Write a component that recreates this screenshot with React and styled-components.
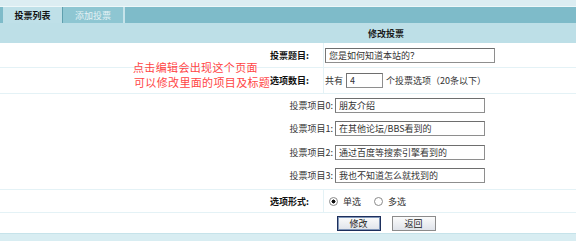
import React from "react";
import styled, { createGlobalStyle } from "styled-components";

const items = [
  "朋友介绍",
  "在其他论坛/BBS看到的",
  "通过百度等搜索引擎看到的",
  "我也不知道怎么就找到的",
];

const App = () => {
  return (
    <Page>
      <GlobalStyle />
      <TopStrip />
      <TabBar>
        <Tab active>投票列表</Tab>
        <Tab>添加投票</Tab>
      </TabBar>
      <HeaderRow>修改投票</HeaderRow>
      <FormRow height={24}>
        <Label>投票题目:</Label>
        <Field>
          <TextBox width={170} value="您是如何知道本站的？" readOnly />
        </Field>
      </FormRow>
      <FormRow height={25}>
        <Label>选项数目:</Label>
        <Field>
          <span>共有</span>
          <TextBox width={37} value="4" readOnly />
          <span>个投票选项（20条以下）</span>
        </Field>
      </FormRow>
      <ItemBlock>
        {items.map((text, i) => (
          <ItemRow key={i}>
            <ItemLabel>投票项目{i}:</ItemLabel>
            <TextBox width={150} value={text} readOnly />
          </ItemRow>
        ))}
      </ItemBlock>
      <FormRow height={22}>
        <Label>选项形式:</Label>
        <Field>
          <Radio checked />
          <RadioText>单选</RadioText>
          <Radio />
          <RadioText>多选</RadioText>
        </Field>
      </FormRow>
      <ButtonRow>
        <Button primary>修改</Button>
        <Button>返回</Button>
      </ButtonRow>
      <BottomBand />
      <Note>
        <NoteLine>点击编辑会出现这个页面</NoteLine>
        <NoteLine indent>可以修改里面的项目及标题</NoteLine>
      </Note>
    </Page>
  );
};

const GlobalStyle = createGlobalStyle`
  html, body {
    margin: 0;
    padding: 0;
    background: #ffffff;
  }
  body {
    font-family: "Noto Sans CJK SC", "DejaVu Sans", sans-serif;
    font-size: 9px;
    color: #333333;
  }
`;

const Page = styled.div`
  position: relative;
  width: 576px;
  height: 241px;
  overflow: hidden;
  display: flex;
  flex-direction: column;
  background: #ffffff;
`;

const TopStrip = styled.div`
  height: 6px;
  background: #dcedf2;
  border-bottom: 1px solid #eef7f9;
`;

const TabBar = styled.div`
  height: 16px;
  display: flex;
  padding-left: 3px;
  background: #7ebbc9;
`;

const Tab = styled.div`
  width: ${(p) => (p.active ? "59px" : "60px")};
  display: flex;
  align-items: center;
  justify-content: center;
  font-weight: ${(p) => (p.active ? "bold" : "normal")};
  color: ${(p) => (p.active ? "#111111" : "#e4f2f5")};
  background: ${(p) => (p.active ? "#bfe0e8" : "#8ec6d2")};
  border-right: ${(p) => (p.active ? "1px solid #5f9fae" : "2px solid #c6e3ea")};
`;

const HeaderRow = styled.div`
  height: 20px;
  display: flex;
  align-items: center;
  justify-content: center;
  padding-left: 196px;
  background: #bddfe7;
  font-weight: bold;
  color: #1a1a1a;
`;

const FormRow = styled.div`
  height: ${(p) => p.height}px;
  display: grid;
  grid-template-columns: 324px 1fr;
  border-bottom: 1px solid #e4f2f6;
`;

const Label = styled.div`
  display: flex;
  align-items: center;
  justify-content: flex-end;
  padding-right: 14px;
  font-weight: bold;
  color: #111111;
  border-right: 1px solid #e4f2f6;
`;

const Field = styled.div`
  display: flex;
  align-items: center;
  gap: 3px;
  padding-left: 1px;
`;

const TextBox = styled.input`
  width: ${(p) => p.width}px;
  height: 15px;
  box-sizing: border-box;
  margin: 0;
  padding: 0 3px;
  border: 1px solid #8e8e8e;
  border-top-color: #6e6e6e;
  border-left-color: #767676;
  font-family: inherit;
  font-size: 9px;
  color: #333333;
  background: #ffffff;
  outline: none;
`;

const ItemBlock = styled.div`
  display: flex;
  flex-direction: column;
  gap: 8.4px;
  padding: 4px 0 6px;
  border-bottom: 1px solid #e4f2f6;
`;

const ItemRow = styled.div`
  display: grid;
  grid-template-columns: 333px 150px;
  column-gap: 2px;
  align-items: center;
  height: 15px;
`;

const ItemLabel = styled.span`
  text-align: right;
  color: #333333;
`;

const Radio = styled.span`
  width: 9px;
  height: 9px;
  box-sizing: border-box;
  margin-left: 4px;
  border: 1px solid #8a8a8a;
  border-radius: 50%;
  background: ${(p) =>
    p.checked
      ? "radial-gradient(circle, #111 0 1.8px, #fff 2.2px)"
      : "#ffffff"};
`;

const RadioText = styled.span`
  margin-left: 2px;
  margin-right: 6px;
  color: #333333;
`;

const ButtonRow = styled.div`
  height: 20px;
  display: flex;
  align-items: center;
  justify-content: center;
  gap: 11px;
  padding-left: 196px;
`;

const Button = styled.button`
  width: 44px;
  height: 15px;
  box-sizing: border-box;
  margin: 0;
  padding: 0;
  font-family: inherit;
  font-size: 9px;
  color: #222222;
  border: 1px solid ${(p) => (p.primary ? "#1d2f5c" : "#8b8b8b")};
  box-shadow: ${(p) => (p.primary ? "inset 0 0 0 1px #7f95b8" : "none")};
  background: linear-gradient(#fbfbfb, #dfe3ea);
`;

const BottomBand = styled.div`
  flex: 1;
  background: #d8edf2;
  border-top: 1px solid #c6e3ea;
`;

const Note = styled.div`
  position: absolute;
  left: 133px;
  top: 60px;
  display: flex;
  flex-direction: column;
  font-size: 11px;
  letter-spacing: 0.35px;
  line-height: 15px;
  color: #ff4545;
  white-space: nowrap;
`;

const NoteLine = styled.span`
  margin-left: ${(p) => (p.indent ? "1px" : "0")};
`;

export default App;
